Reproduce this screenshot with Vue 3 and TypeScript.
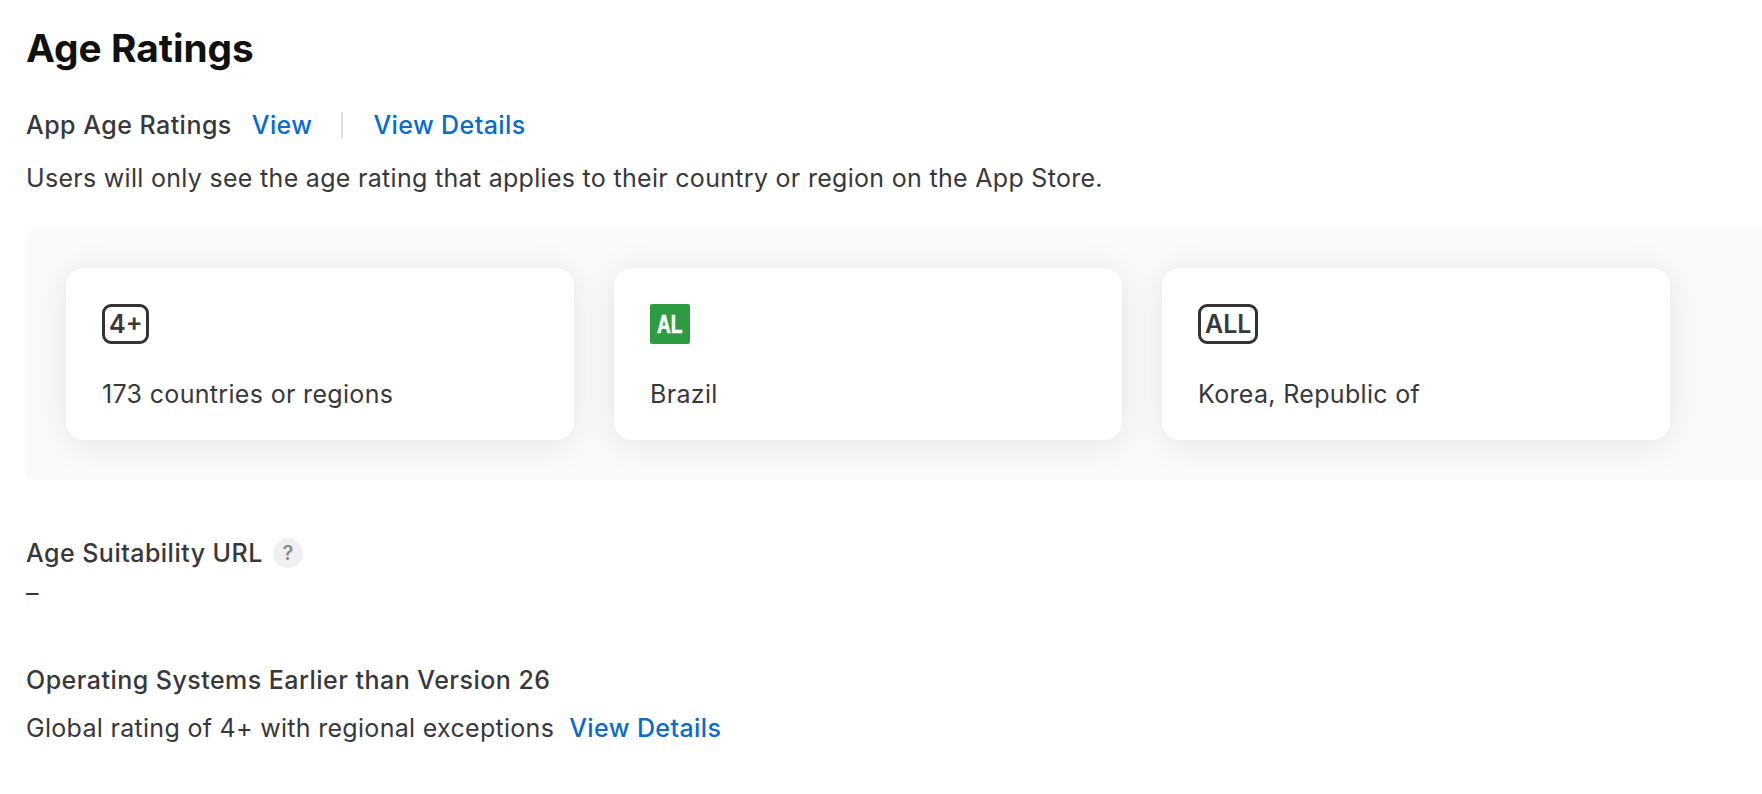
<template>
  <main class="page">
    <h1 class="title">Age Ratings</h1>

    <div class="rating-head">
      <span class="label">App Age Ratings</span>
      <a class="link first">View</a>
      <span class="divider"></span>
      <a class="link">View Details</a>
    </div>
    <p class="hint">Users will only see the age rating that applies to their country or region on the App Store.</p>

    <section class="panel">
      <div v-for="card in cards" :key="card.region" class="card">
        <div class="badge-row">
          <span :class="['badge', card.kind]"><span class="badge-text">{{ card.rating }}</span></span>
        </div>
        <div class="region">{{ card.region }}</div>
      </div>
    </section>

    <div class="field url-field">
      <div class="field-label">
        <span class="label">Age Suitability URL</span>
        <span class="help">?</span>
      </div>
      <div class="empty">–</div>
    </div>

    <div class="field os-field">
      <div class="label">Operating Systems Earlier than Version 26</div>
      <div class="os-line">
        <span>Global rating of 4+ with regional exceptions</span>
        <a class="link">View Details</a>
      </div>
    </div>
  </main>
</template>

<script setup lang="ts">
interface RatingCard {
  rating: string;
  region: string;
  kind: 'outline' | 'green';
}

const cards: RatingCard[] = [
  { rating: '4+', region: '173 countries or regions', kind: 'outline' },
  { rating: 'AL', region: 'Brazil', kind: 'green' },
  { rating: 'ALL', region: 'Korea, Republic of', kind: 'outline' },
];
</script>

<style>
html,
body {
  margin: 0;
  background: #fff;
  overflow: hidden;
}
</style>

<style scoped>
.page {
  width: 1762px;
  height: 794px;
  box-sizing: border-box;
  padding: 24px 0 0 26px;
  font-family: Inter, "Liberation Sans", sans-serif;
  font-size: 25px;
  letter-spacing: 0.3px;
  line-height: 36px;
  color: #38383b;
  overflow: hidden;
}

.title {
  margin: 0;
  font-size: 38.8px;
  letter-spacing: 0;
  line-height: 48px;
  font-weight: 700;
  color: #111;
}

.rating-head {
  display: flex;
  align-items: center;
  margin-top: 35px;
  height: 36px;
}

.label {
  font-weight: 450;
  letter-spacing: 0.47px;
}

.link {
  color: #0a6cc9;
  font-weight: 450;
  letter-spacing: 0.4px;
  cursor: pointer;
}

.link.first {
  margin-left: 20px;
}

.divider {
  width: 2px;
  height: 26px;
  background: #dcdcde;
  margin: 0 30px 0 29px;
}

.hint {
  margin: 17px 0 0;
}

.panel {
  display: flex;
  gap: 40px;
  margin-top: 32px;
  padding: 40px;
  height: 252px;
  box-sizing: border-box;
  background: #fafafa;
  border-radius: 8px 0 0 8px;
}

.card {
  width: 508px;
  height: 172px;
  box-sizing: border-box;
  padding: 36px 36px 0;
  background: #fff;
  border-radius: 18px;
  box-shadow: 0 4px 36px rgba(0, 0, 0, 0.09);
}

.badge-row {
  display: flex;
  height: 40px;
}

.badge {
  display: flex;
  align-items: center;
  justify-content: center;
  box-sizing: border-box;
  height: 40px;
  font-size: 25px;
  letter-spacing: 0;
  line-height: 1;
  font-weight: 600;
}

.badge.outline {
  padding: 0 4px;
  border: 3px solid #333336;
  border-radius: 9px;
}

.badge.green {
  width: 40px;
  background: #2e9a41;
  color: #fff;
  border-radius: 2px;
  font-family: "Liberation Sans", sans-serif;
  font-weight: 700;
}

.badge.green .badge-text {
  display: block;
  transform: scaleX(0.76);
  -webkit-text-stroke: 0.6px #fff;
}

.region {
  margin-top: 32px;
  letter-spacing: 0.33px;
}

.url-field {
  margin-top: 55px;
}

.field-label {
  display: flex;
  align-items: center;
  gap: 10px;
}

.help {
  display: flex;
  align-items: center;
  justify-content: center;
  width: 30px;
  height: 30px;
  border-radius: 50%;
  background: #f0f0f0;
  color: #8a8a8e;
  font-size: 20px;
  letter-spacing: 0;
  font-weight: 600;
}

.empty {
  margin-top: 4px;
}

.os-field {
  margin-top: 51px;
}

.os-line {
  display: flex;
  gap: 15px;
  margin-top: 12px;
}
</style>
